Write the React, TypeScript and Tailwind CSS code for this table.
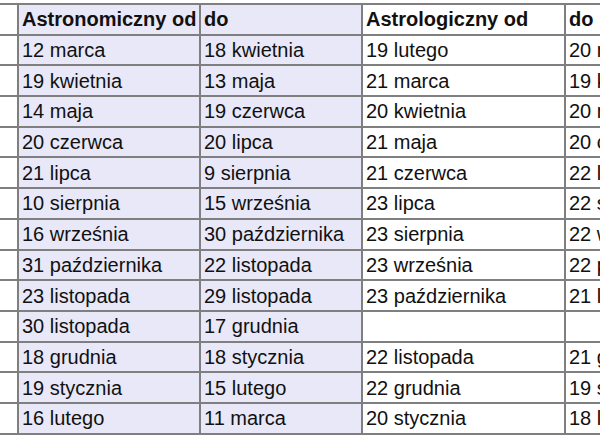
const rows: [string, string, string, string][] = [
  ["12 marca", "18 kwietnia", "19 lutego", "20 marca"],
  ["19 kwietnia", "13 maja", "21 marca", "19 kwietnia"],
  ["14 maja", "19 czerwca", "20 kwietnia", "20 maja"],
  ["20 czerwca", "20 lipca", "21 maja", "20 czerwca"],
  ["21 lipca", "9 sierpnia", "21 czerwca", "22 lipca"],
  ["10 sierpnia", "15 września", "23 lipca", "22 sierpnia"],
  ["16 września", "30 października", "23 sierpnia", "22 września"],
  ["31 października", "22 listopada", "23 września", "22 października"],
  ["23 listopada", "29 listopada", "23 października", "21 listopada"],
  ["30 listopada", "17 grudnia", "", ""],
  ["18 grudnia", "18 stycznia", "22 listopada", "21 grudnia"],
  ["19 stycznia", "15 lutego", "22 grudnia", "19 stycznia"],
  ["16 lutego", "11 marca", "20 stycznia", "18 lutego"],
];

const cell = "flex items-center overflow-hidden whitespace-nowrap pl-[3px]";

export default function App() {
  return (
    <div
      className="h-[438px] w-[600px] overflow-hidden bg-white text-[20px] leading-none text-[#111]"
      style={{ fontFamily: '"Liberation Sans", Arial, sans-serif' }}
    >
      <div className="mt-[3px] grid grid-cols-[17px_180px_160px_201px_60px] auto-rows-[28.7px] gap-[2px] bg-[#7f7f7f] py-[2px]">
        <div className={`${cell} bg-white`} />
        <div className={`${cell} bg-[#e8e8f8] font-bold`}>Astronomiczny od</div>
        <div className={`${cell} bg-[#e8e8f8] font-bold`}>do</div>
        <div className={`${cell} bg-white font-bold`}>Astrologiczny od</div>
        <div className={`${cell} bg-white font-bold`}>do</div>
        {rows.map((r, i) => (
          <div key={i} className="contents">
            <div className={`${cell} bg-white`} />
            <div className={`${cell} bg-[#e8e8f8]`}>{r[0]}</div>
            <div className={`${cell} bg-[#e8e8f8]`}>{r[1]}</div>
            <div className={`${cell} bg-white`}>{r[2]}</div>
            <div className={`${cell} bg-white`}>{r[3]}</div>
          </div>
        ))}
      </div>
    </div>
  );
}
